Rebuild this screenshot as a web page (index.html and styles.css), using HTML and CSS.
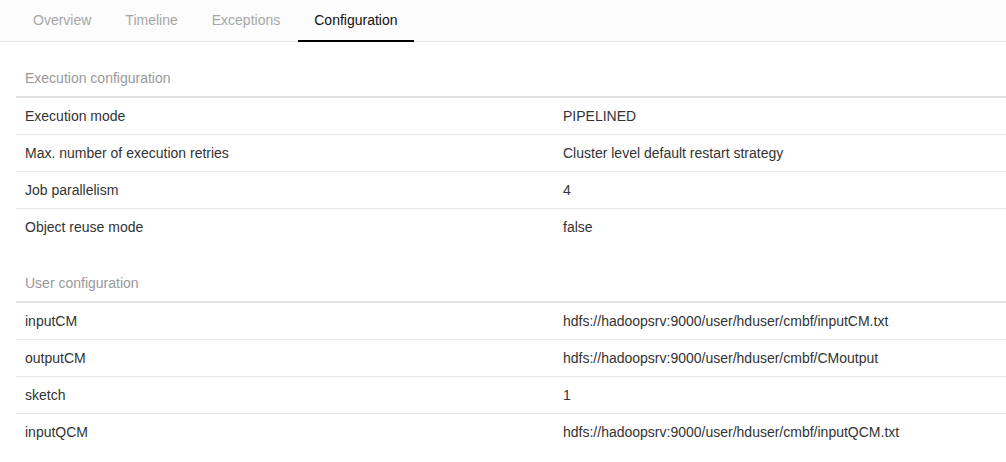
FILE: index.html
```html
<!DOCTYPE html>
<html>
<head>
<meta charset="utf-8">
<link rel="stylesheet" href="styles.css">
</head>
<body>
<nav class="tabs">
  <a class="tab">Overview</a>
  <a class="tab">Timeline</a>
  <a class="tab">Exceptions</a>
  <a class="tab active">Configuration</a>
</nav>
<main class="content">
  <table class="config">
    <colgroup><col class="col-key"><col class="col-val"></colgroup>
    <thead><tr><th colspan="2">Execution configuration</th></tr></thead>
    <tbody>
      <tr><td>Execution mode</td><td>PIPELINED</td></tr>
      <tr><td>Max. number of execution retries</td><td>Cluster level default restart strategy</td></tr>
      <tr><td>Job parallelism</td><td>4</td></tr>
      <tr><td>Object reuse mode</td><td>false</td></tr>
    </tbody>
  </table>
  <table class="config">
    <colgroup><col class="col-key"><col class="col-val"></colgroup>
    <thead><tr><th colspan="2">User configuration</th></tr></thead>
    <tbody>
      <tr><td>inputCM</td><td>hdfs://hadoopsrv:9000/user/hduser/cmbf/inputCM.txt</td></tr>
      <tr><td>outputCM</td><td>hdfs://hadoopsrv:9000/user/hduser/cmbf/CMoutput</td></tr>
      <tr><td>sketch</td><td>1</td></tr>
      <tr><td>inputQCM</td><td>hdfs://hadoopsrv:9000/user/hduser/cmbf/inputQCM.txt</td></tr>
    </tbody>
  </table>
</main>
</body>
</html>
```
FILE: styles.css
```css
html, body {
  margin: 0;
  padding: 0;
  background: #fff;
  font-family: "Liberation Sans", Arial, sans-serif;
  font-size: 14px;
  color: #333;
}
.tabs {
  display: flex;
  height: 41px;
  padding-left: 17px;
  border-bottom: 1px solid #e4e4e4;
  background: #fcfcfc;
}
.tab {
  display: block;
  padding: 0 16px;
  margin-right: 2px;
  line-height: 40px;
  height: 40px;
  color: #a6a6a6;
  border-bottom: 2px solid transparent;
  margin-bottom: -1px;
  cursor: pointer;
}
.tab.active {
  color: #111;
  border-bottom-color: #000;
}
.content {
  padding: 18px 0 0 16px;
}
.config {
  width: 990px;
  border-collapse: collapse;
  margin-bottom: 19px;
  table-layout: fixed;
}
.col-key {
  width: 538px;
}
.config th {
  text-align: left;
  font-weight: normal;
  color: #999;
  padding: 8px 9px;
  line-height: 20px;
  border-bottom: 2px solid #e2e2e2;
}
.config td {
  padding: 8px 9px;
  line-height: 20px;
  border-bottom: 1px solid #e6e6e6;
  color: #333;
}
.config tbody tr:last-child td {
  border-bottom-color: transparent;
}
```
